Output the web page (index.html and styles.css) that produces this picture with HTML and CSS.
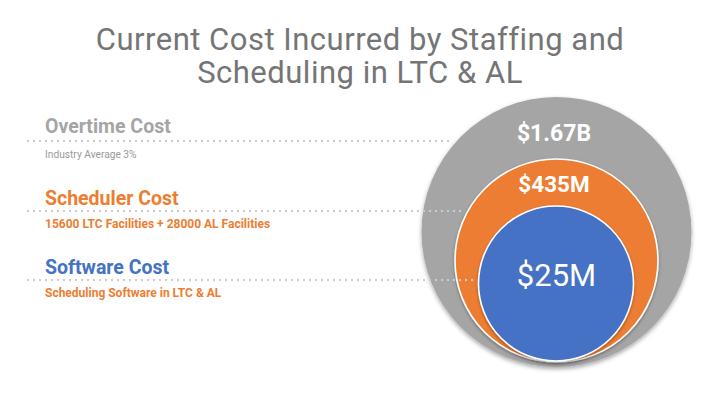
FILE: index.html
```html
<!DOCTYPE html>
<html lang="en">
<head>
<meta charset="utf-8">
<title>Current Cost Incurred by Staffing and Scheduling</title>
<link rel="stylesheet" href="styles.css">
</head>
<body>
<div class="slide">
  <h1 class="title"><span class="title-line">Current Cost Incurred by Staffing and</span><span class="title-line">Scheduling in LTC &amp; AL</span></h1>
  <div class="main">
    <div class="legend">
      <div class="row">
        <div class="row-head head-gray">Overtime Cost</div>
        <div class="rule rule-overtime"></div>
        <div class="row-sub sub-gray">Industry Average 3%</div>
      </div>
      <div class="row">
        <div class="row-head head-orange">Scheduler Cost</div>
        <div class="rule rule-scheduler"></div>
        <div class="row-sub sub-orange">15600 LTC Facilities + 28000 AL Facilities</div>
      </div>
      <div class="row">
        <div class="row-head head-blue">Software Cost</div>
        <div class="rule rule-software"></div>
        <div class="row-sub sub-orange">Scheduling Software in LTC &amp; AL</div>
      </div>
    </div>
    <div class="chart">
      <svg class="chart-svg" width="300" height="300" viewBox="407 90 300 300" xmlns="http://www.w3.org/2000/svg">
        <defs>
          <filter id="softGray" x="-20%" y="-20%" width="140%" height="140%">
            <feDropShadow dx="0" dy="2" stdDeviation="2.2" flood-color="#000" flood-opacity="0.35"/>
          </filter>
          <filter id="softRing" x="-20%" y="-20%" width="140%" height="140%">
            <feDropShadow dx="0" dy="1.5" stdDeviation="1.6" flood-color="#000" flood-opacity="0.35"/>
          </filter>
        </defs>
        <circle cx="556.5" cy="233" r="135" fill="#a5a5a5" filter="url(#softGray)"/>
        <circle cx="556.5" cy="261.5" r="101.5" fill="#ed7d31" stroke="#ffffff" stroke-width="1.6" filter="url(#softRing)"/>
        <circle cx="556" cy="284.5" r="77.5" fill="#4472c4" stroke="#ffffff" stroke-width="1.6" filter="url(#softRing)"/>
        <text class="val val-big" x="554" y="142" text-anchor="middle">$1.67B</text>
        <text class="val val-mid" x="554" y="193" text-anchor="middle">$435M</text>
        <text class="val val-small" x="556.5" y="287" text-anchor="middle">$25M</text>
      </svg>
    </div>
  </div>
</div>
</body>
</html>
```

FILE: styles.css
```css
html, body {
  margin: 0;
  padding: 0;
  background: #ffffff;
}

.slide {
  width: 720px;
  height: 405px;
  overflow: hidden;
  background: #ffffff;
  font-family: Roboto, "Liberation Sans", Arial, sans-serif;
}

.title {
  margin: 0;
  padding-top: 23px;
  font-weight: 400;
  font-size: 31px;
  line-height: 33px;
  color: #757575;
  text-align: center;
  letter-spacing: 0.5px;
}

.title-line {
  display: block;
  height: 33px;
}

.main {
  display: grid;
  grid-template-columns: 720px;
  grid-template-rows: 315px;
}

.legend {
  grid-area: 1 / 1;
  z-index: 2;
  padding-top: 26px;
  padding-left: 27px;
  display: flex;
  flex-direction: column;
  gap: 25px;
  align-self: start;
}

.row {
  display: flex;
  flex-direction: column;
}

.row-head {
  padding-left: 18px;
  font-weight: 700;
  font-size: 19.5px;
  line-height: 24px;
}

.head-gray { color: #a5a5a5; }
.head-orange { color: #ed7d31; }
.head-blue { color: #4472c4; }

.rule {
  height: 2px;
  margin-top: -1px;
  background-image: linear-gradient(90deg, #cccccc 0, #cccccc 1.8px, transparent 1.8px);
  background-size: 6px 2px;
  background-repeat: repeat-x;
}

.rule-overtime { width: 426px; margin-top: 1px; }
.rule-scheduler { width: 435px; }
.rule-software { width: 450px; }

.row-sub {
  padding-left: 18px;
  margin-top: 5px;
  line-height: 14px;
}

.sub-gray {
  margin-top: 6px;
  font-size: 10.2px;
  color: #9a9a9a;
  font-weight: 400;
}

.sub-orange {
  font-size: 12px;
  color: #ed7d31;
  font-weight: 700;
}

.chart {
  grid-area: 1 / 1;
  z-index: 1;
  margin-left: 407px;
  width: 300px;
  height: 300px;
}

.chart-svg {
  display: block;
}

.val {
  fill: #ffffff;
  font-family: Roboto, "Liberation Sans", Arial, sans-serif;
}

.val-big {
  font-weight: 700;
  font-size: 23px;
}

.val-mid {
  font-weight: 700;
  font-size: 22.5px;
}

.val-small {
  font-weight: 400;
  font-size: 31px;
}
```
